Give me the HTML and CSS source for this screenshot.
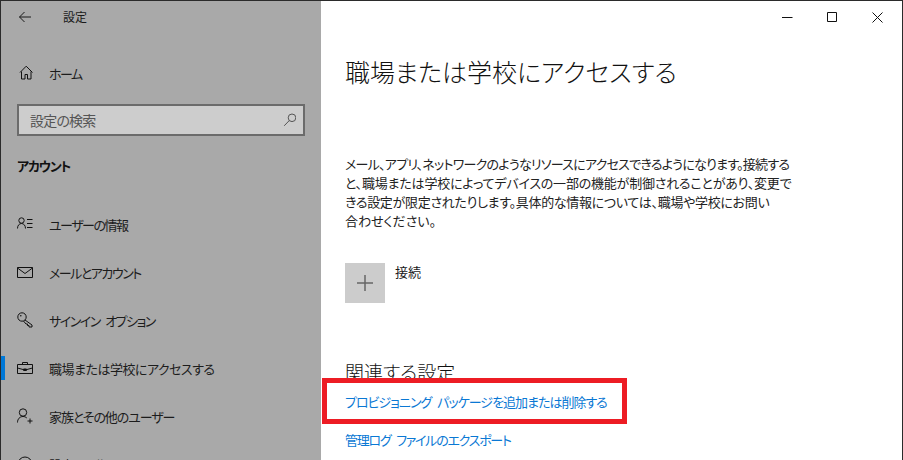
FILE: index.html
```html
<!DOCTYPE html>
<html lang="ja">
<head>
<meta charset="utf-8">
<title>設定</title>
<link rel="stylesheet" href="styles.css">
</head>
<body>
<div class="window">
  <aside class="sidebar">
    <div class="titlebar">
      <svg class="back" width="16" height="16" viewBox="0 0 16 16"><path d="M13 8H1.500M6.500 3 1.500 8 6.500 13" fill="none" stroke="#1a1a1a" stroke-width="1"/></svg>
      <span class="apptitle">設定</span>
    </div>
    <div class="nav-item home">
      <svg class="icon" width="16" height="16" viewBox="0 0 16 16"><path d="M3 7.500 9.200 1.200 15.500 7.500M4.500 6.500V14H8V9.500h2.500V14H14V6.500" fill="none" stroke="#111" stroke-width="1"/></svg>
      <span class="tight">ホーム</span>
    </div>
    <div class="search">
      <span>設定の検索</span>
      <svg width="16" height="16" viewBox="0 0 16 16"><circle cx="12" cy="5.800" r="3.800" fill="none" stroke="#555" stroke-width="1"/><path d="M9.300 8.500 4.200 13.800" stroke="#555" stroke-width="1"/></svg>
    </div>
    <div class="section">アカウント</div>
    <div class="nav-item">
      <svg class="icon" width="16" height="16" viewBox="0 0 16 16"><circle cx="4.500" cy="4.500" r="2.700" fill="none" stroke="#111"/><path d="M.5 12.500c0-3 1.700-5 4-5s4 2 4 5M10 3.500h5.500M10 7.500h5.500M10 11.500h5.500" fill="none" stroke="#111"/></svg>
      <span class="tight">ユーザーの情報</span>
    </div>
    <div class="nav-item">
      <svg class="icon" width="16" height="16" viewBox="0 0 16 16"><path d="M.5 3.500h15v10H.5zM.5 4 8 9.500 15.500 4" fill="none" stroke="#111"/></svg>
      <span class="tight">メールとアカウント</span>
    </div>
    <div class="nav-item">
      <svg class="icon" width="16" height="16" viewBox="0 0 16 16"><circle cx="5" cy="5" r="4.200" fill="none" stroke="#111"/><circle cx="3.800" cy="3.800" r=".8" fill="#111"/><path d="m8 8 7 5v2h-3v-1.500h-1.500V12H9L6.500 9" fill="none" stroke="#111"/></svg>
      <span class="spaced">サインイン オプション</span>
    </div>
    <div class="nav-item active">
      <i class="marker"></i>
      <svg class="icon" width="16" height="16" viewBox="0 0 16 16"><path d="M.5 4.500h15v9H.5zM5.500 4.500v-2h5v2M.5 8l5.500 1.500h4L15.500 8M6.500 9h3v1.500h-3z" fill="none" stroke="#111"/></svg>
      <span class="loose">職場または学校にアクセスする</span>
    </div>
    <div class="nav-item">
      <svg class="icon" width="16" height="16" viewBox="0 0 16 16"><circle cx="6" cy="4.500" r="3.700" fill="none" stroke="#111"/><path d="M.5 14.500c0-3.500 2.300-6 5.500-6 1.500 0 2.800.5 3.800 1.500M13 10.500v5M10.500 13h5" fill="none" stroke="#111"/></svg>
      <span class="snug">家族とその他のユーザー</span>
    </div>
    <div class="nav-item">
      <svg class="icon" width="16" height="16" viewBox="0 0 16 16"><circle cx="8" cy="8" r="7" fill="none" stroke="#111"/></svg>
      <span class="snug">設定の同期</span>
    </div>
  </aside>
  <main class="content">
    <div class="caption">
      <svg width="11" height="11" viewBox="0 0 11 11"><path d="M0 5.500h10.500" stroke="#111"/></svg>
      <svg width="11" height="11" viewBox="0 0 11 11"><path d="M.5.500h9v9h-9z" fill="none" stroke="#111"/></svg>
      <svg width="11" height="11" viewBox="0 0 11 11"><path d="m.5.500 10 10M10.500.500l-10 10" stroke="#111"/></svg>
    </div>
    <h1>職場または学校にアクセスする</h1>
    <p class="desc">
      <span class="l1">メール、アプリ、ネットワークのようなリソースにアクセスできるようになります。接続する</span>
      <span class="l2">と、職場または学校によってデバイスの一部の機能が制御されることがあり、変更で</span>
      <span class="l3">きる設定が限定されたりします。具体的な情報については、職場や学校にお問い</span>
      <span class="l4">合わせください。</span>
    </p>
    <div class="connect">
      <div class="plus"><svg width="16" height="16" viewBox="0 0 16 16"><path d="M0 8h16M8 0v16" stroke="#666" stroke-width="1.500"/></svg></div>
      <span>接続</span>
    </div>
    <h2>関連する設定</h2>
    <a class="link first">プロビジョニング パッケージを追加または削除する</a>
    <a class="link second">管理ログ ファイルのエクスポート</a>
  </main>
  <div class="highlight"></div>
</div>
</body>
</html>
```
FILE: styles.css
```css
* { box-sizing: border-box; }
html, body { margin: 0; height: 100%; overflow: hidden; background: #fff; }
body { font-family: "Noto Sans CJK JP", "Noto Sans", sans-serif; color: #1a1a1a; font-feature-settings: "palt"; }
.window { position: relative; display: flex; width: 903px; height: 460px; border: 1px solid #2b2b2b; border-bottom: 0; overflow: hidden; }
.sidebar { width: 320px; flex: none; background: #a9a9a9; font-size: 13px; overflow: hidden; }
.titlebar { display: flex; align-items: center; height: 31px; padding-left: 17px; }
.apptitle { margin-left: 29px; font-size: 12px; }
.nav-item { position: relative; display: flex; align-items: center; height: 48px; padding-left: 16px; color: #1c1c1c; }
.nav-item .icon { margin-right: 16px; flex: none; }
.tight { letter-spacing: -1.5px; }
.snug { letter-spacing: -1.1px; }
.spaced { letter-spacing: -1.5px; word-spacing: 4px; }
.loose { letter-spacing: -.5px; }
.home { margin-top: 17px; }
.search { display: flex; align-items: center; justify-content: space-between; width: 288px; height: 32px; margin: 7px 0 0 16px; padding: 0 7px 0 11px; background: #cdcdcd; border: 2px solid #6b6b6b; font-size: 14px; letter-spacing: -.8px; color: #555; }
.section { margin: 20px 0 24px 16px; font-size: 13px; font-weight: 700; letter-spacing: -1.2px; color: #111; line-height: 20px; }
.marker { position: absolute; left: 0; top: 12px; width: 4px; height: 24px; background: #0078d7; }
.content { flex: 1; padding: 0 0 0 24px; min-width: 0; }
.caption { display: flex; justify-content: flex-end; gap: 34px; padding: 11px 19px 0 0; height: 31px; }
h1 { margin: 21px 0 0; font-size: 25px; font-weight: 300; line-height: 36px; color: #111; }
.desc { margin: 65px 0 0; font-size: 13px; line-height: 19px; color: #222; }
.desc span { display: block; white-space: nowrap; }
.l1 { letter-spacing: -.75px; }
.l2 { letter-spacing: -.2px; }
.l3 { letter-spacing: -.3px; }
.l4 { letter-spacing: 0; }
.connect { display: flex; margin-top: 33px; font-size: 13px; line-height: 16px; }
.connect span { padding-top: 1px; }
.plus { display: flex; align-items: center; justify-content: center; width: 40px; height: 40px; margin-right: 10px; background: #ccc; }
h2 { margin: 56px 0 0; font-size: 19px; font-weight: 300; line-height: 26px; color: #111; }
.link { display: block; font-size: 13px; line-height: 20px; word-spacing: 4px; color: #0a78d4; }
.first { margin-top: 7px; letter-spacing: -1px; }
.second { margin-top: 18px; letter-spacing: -1.25px; }
.highlight { position: absolute; left: 321px; top: 377px; width: 305px; height: 46px; border: 5px solid #ed1c24; }
```
